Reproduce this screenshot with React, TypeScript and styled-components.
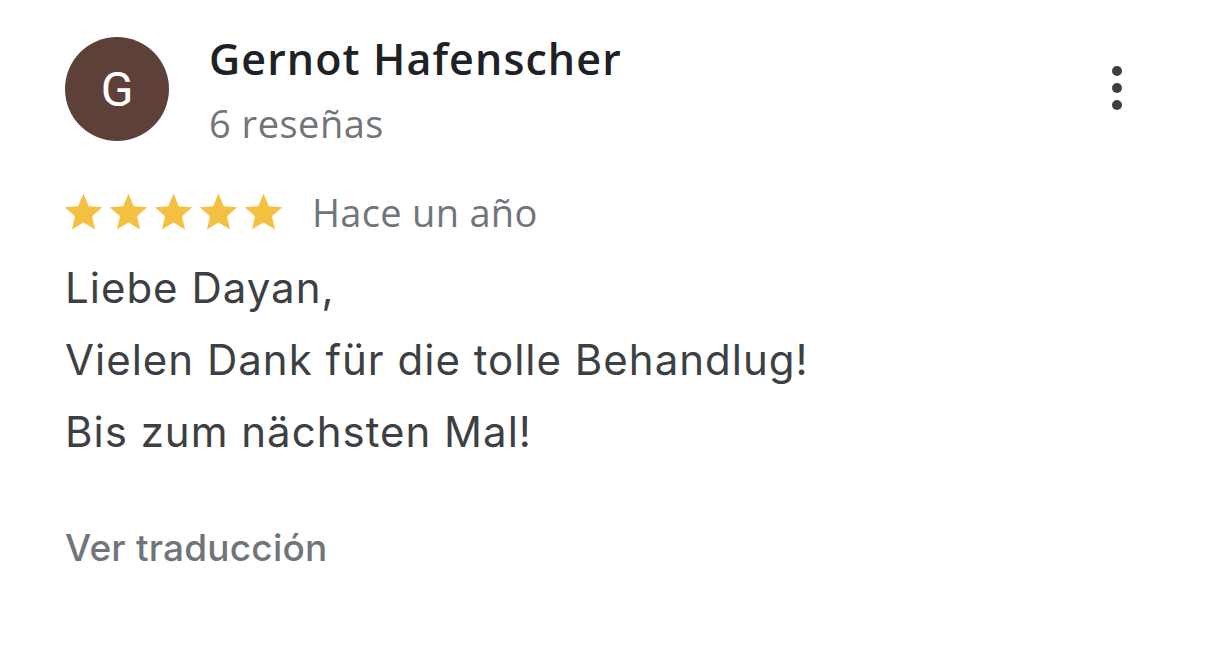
import React from "react";
import styled, { createGlobalStyle } from "styled-components";

const Global = createGlobalStyle`
  html, body { margin: 0; padding: 0; background: #fff; }
  body { font-family: Roboto, "Noto Sans", sans-serif; }
`;

const Card = styled.div`
  width: 1220px;
  height: 657px;
  box-sizing: border-box;
  padding: 37px 0 0 65px;
  display: flex;
  flex-direction: column;
`;

const Header = styled.div`
  display: flex;
  align-items: flex-start;
  padding-right: 91px;
`;

const Avatar = styled.div`
  width: 104px;
  height: 104px;
  border-radius: 50%;
  background: #5d4037;
  color: #fff;
  font-family: Roboto, sans-serif;
  font-size: 48px;
  display: flex;
  align-items: center;
  justify-content: center;
  flex: none;
`;

const Who = styled.div`
  margin-left: 40px;
  display: flex;
  flex-direction: column;
  flex: 1;
`;

const Name = styled.div`
  font-family: "Open Sans", sans-serif;
  font-size: 43px;
  font-weight: 600;
  letter-spacing: 1.1px;
  color: #202124;
  line-height: 52px;
  margin-top: -4px;
`;

const Sub = styled.div`
  font-family: "Open Sans", sans-serif;
  font-size: 38px;
  letter-spacing: 0.5px;
  color: #70757a;
  line-height: 44px;
  margin-top: 16px;
`;

const MenuBtn = styled.div`
  width: 24px;
  display: flex;
  flex-direction: column;
  align-items: center;
  gap: 7px;
  margin-top: 29px;
`;

const Dot = styled.span`
  width: 10px;
  height: 10px;
  border-radius: 50%;
  background: #3c4043;
`;

const RatingRow = styled.div`
  display: flex;
  align-items: center;
  margin-top: 44px;
  height: 46px;
`;

const Stars = styled.div`
  display: flex;
  margin-left: -4px;
`;

const When = styled.span`
  margin-left: 26px;
  font-family: "Open Sans", sans-serif;
  font-size: 38px;
  letter-spacing: 0.3px;
  color: #70757a;
`;

const Body = styled.div`
  margin-top: 17px;
  font-family: Inter, sans-serif;
  font-size: 42px;
  letter-spacing: 1px;
  line-height: 72px;
  color: #3c4043;
`;

const Translate = styled.div`
  margin-top: 57px;
  font-family: Inter, sans-serif;
  font-size: 37px;
  font-weight: 500;
  letter-spacing: 0.2px;
  color: #70757a;
`;

const Star = () => (
  <svg width="45" height="45" viewBox="0 0 24 24">
    <path
      fill="#f4c041"
      d="M12 17.27 18.18 21l-1.64-7.03L22 9.24l-7.19-.61L12 2 9.19 8.63 2 9.24l5.46 4.73L5.82 21z"
    />
  </svg>
);

export default function App() {
  return (
    <>
      <Global />
      <Card>
        <Header>
          <Avatar>G</Avatar>
          <Who>
            <Name>Gernot Hafenscher</Name>
            <Sub>6 reseñas</Sub>
          </Who>
          <MenuBtn>
            <Dot />
            <Dot />
            <Dot />
          </MenuBtn>
        </Header>
        <RatingRow>
          <Stars>
            {[0, 1, 2, 3, 4].map((i) => (
              <Star key={i} />
            ))}
          </Stars>
          <When>Hace un año</When>
        </RatingRow>
        <Body>
          <div>Liebe Dayan,</div>
          <div>Vielen Dank für die tolle Behandlug!</div>
          <div>Bis zum nächsten Mal!</div>
        </Body>
        <Translate>Ver traducción</Translate>
      </Card>
    </>
  );
}
